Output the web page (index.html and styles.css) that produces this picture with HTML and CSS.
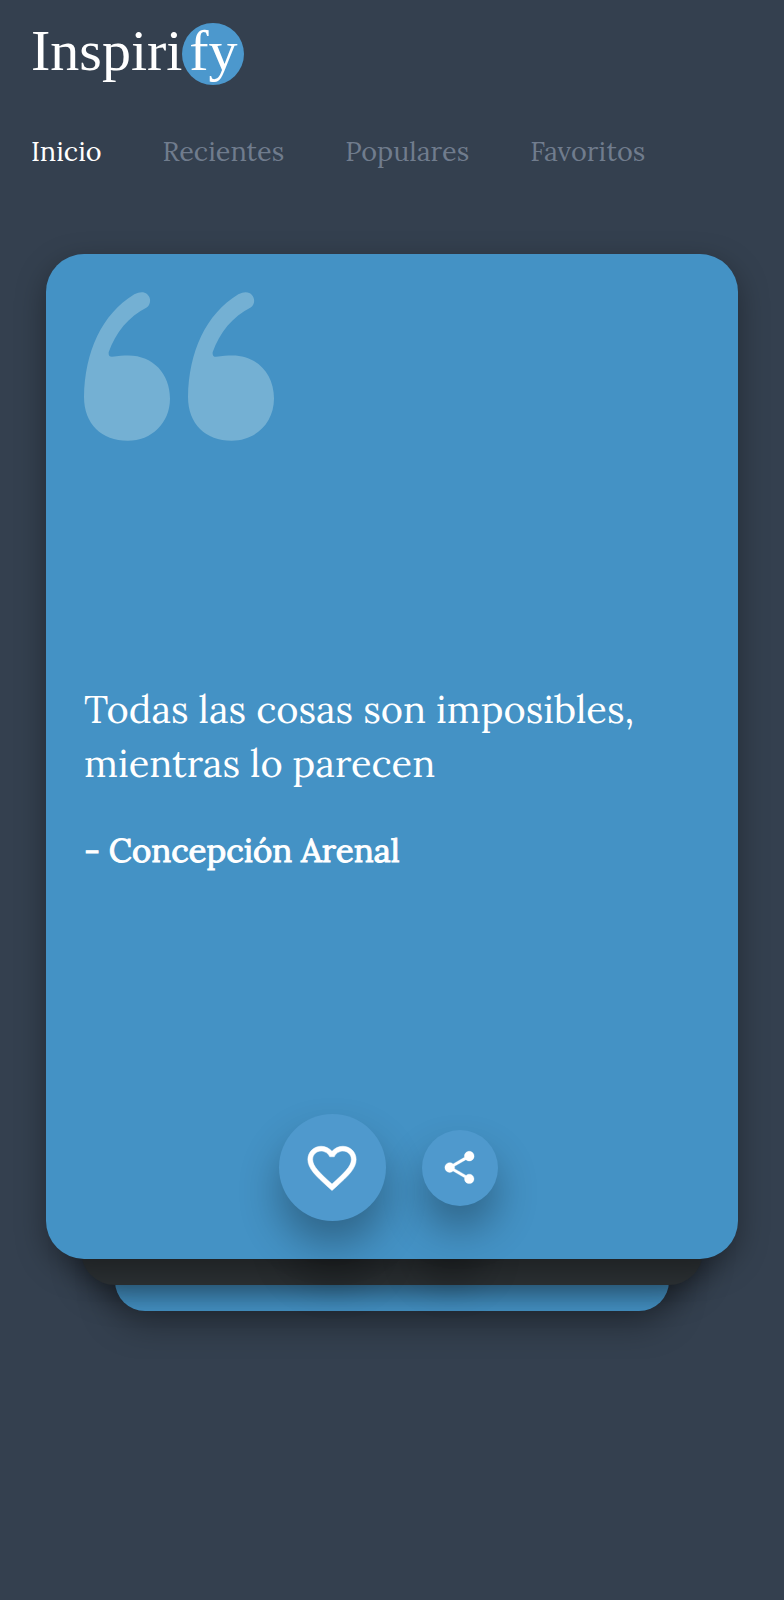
FILE: index.html
```html
<!DOCTYPE html>
<html lang="es">
<head>
    <meta charset="UTF-8">
    <meta name="viewport" content="width=device-width, initial-scale=1.0">
    <title>Inspirify</title>
    <link rel="stylesheet" href="styles.css">
</head>
<body>
    <header>
        <a href="#" class="logo">Inspiri<span class="logo-circle">fy</span></a>
        <nav>
            <a href="#" class="active">Inicio</a>
            <a href="#">Recientes</a>
            <a href="#">Populares</a>
            <a href="#">Favoritos</a>
        </nav>
    </header>

    <main class="stack">
        <div class="layer layer-back"></div>
        <div class="layer layer-middle"></div>
        <article class="card">
            <svg class="quote-icon" viewBox="132 141 570 446" aria-hidden="true">
                <path id="quote-mark" d="M305 141C331 141 339 174 320 187C266 214 227 262 206 321C205 330 208 335 216 335C235 332 250 331 265 331C340 331 390 387 390 460C390 533 335 587 263 587C185 587 132 537 132 455C134 320 185 207 283 147C291 143 298 141 305 141Z"/>
                <use href="#quote-mark" x="312"/>
            </svg>
            <div class="quote">
                <p class="quote-text">Todas las cosas son imposibles, mientras lo parecen</p>
                <p class="author">- Concepción Arenal</p>
            </div>
            <div class="actions">
                <button class="like" aria-label="Me gusta">
                    <svg viewBox="0 0 24 24"><path d="M16.5 3c-1.74 0-3.41.81-4.5 2.09C10.91 3.81 9.24 3 7.5 3 4.42 3 2 5.42 2 8.5c0 3.78 3.4 6.86 8.55 11.54L12 21.35l1.45-1.32C18.6 15.36 22 12.28 22 8.5 22 5.42 19.58 3 16.5 3zm-4.4 15.55l-.1.1-.1-.1C7.14 14.24 4 11.39 4 8.5 4 6.5 5.5 5 7.5 5c1.54 0 3.04.99 3.57 2.36h1.87C13.46 5.99 14.96 5 16.5 5c2 0 3.5 1.5 3.5 3.5 0 2.89-3.14 5.74-7.9 10.05z"/></svg>
                </button>
                <button class="share" aria-label="Compartir">
                    <svg viewBox="0 0 24 24"><path d="M18 16.08c-.76 0-1.44.3-1.96.77L8.91 12.7c.05-.23.09-.46.09-.7s-.04-.47-.09-.7l7.05-4.11c.54.5 1.25.81 2.04.81 1.66 0 3-1.34 3-3s-1.34-3-3-3-3 1.34-3 3c0 .24.04.47.09.7L8.04 9.81C7.5 9.31 6.79 9 6 9c-1.66 0-3 1.34-3 3s1.34 3 3 3c.79 0 1.5-.31 2.04-.81l7.12 4.16c-.05.21-.08.43-.08.65 0 1.61 1.31 2.92 2.92 2.92s2.92-1.31 2.92-2.92-1.31-2.92-2.92-2.92z"/></svg>
                </button>
            </div>
        </article>
    </main>
</body>
</html>
```

FILE: styles.css
```css
* {
    box-sizing: border-box;
}
body {
    margin: 0;
    background-color: #34404f;
    color: #fff;
    font-family: Lora, "Liberation Serif", serif;
}
a {
    color: inherit;
    text-decoration: none;
}
header {
    padding: 23px 31px 0;
}
.logo {
    display: flex;
    width: max-content;
    font-family: "Liberation Serif", serif;
    font-size: 58px;
    line-height: 56px;
}
.logo-circle {
    width: 62px;
    height: 62px;
    border-radius: 50%;
    background-color: #4c98cd;
    text-align: center;
}
nav {
    display: flex;
    flex-wrap: wrap;
    gap: 0 61px;
    margin-top: 48px;
    font-size: 27px;
    line-height: 36px;
}
nav a {
    color: #707c8d;
}
nav .active {
    color: #fff;
}

/* tarjetas apiladas */
.stack {
    position: relative;
    z-index: 0;
    margin: 85px 46px 100px;
}
.layer {
    position: absolute;
    height: 200px;
}
.layer-back {
    right: 10%;
    bottom: -52px;
    left: 10%;
    border-radius: 30px;
    background-color: #4492c5;
    box-shadow: 0 10px 36px rgba(0, 0, 0, 0.4);
}
.layer-middle {
    right: 5%;
    bottom: -26px;
    left: 5%;
    border-radius: 34px;
    background-color: #2b3033;
    box-shadow: 0 10px 30px rgba(0, 0, 0, 0.45);
}
/* sombra de los botones de la tarjeta de atrás */
.layer-middle::before,
.layer-middle::after {
    content: "";
    position: absolute;
    bottom: 26px;
    border-radius: 50%;
    box-shadow: 0 24px 36px rgba(0, 0, 0, 0.25);
}
.layer-middle::before {
    left: 33%;
    width: 96px;
    height: 96px;
}
.layer-middle::after {
    left: 54%;
    width: 68px;
    height: 68px;
}
.card {
    position: relative;
    display: flex;
    flex-direction: column;
    min-height: 1005px;
    padding: 38px;
    border-radius: 38px;
    background-color: #4492c5;
    box-shadow: 0 10px 30px rgba(0, 0, 0, 0.35);
}
.quote-icon {
    width: 190px;
    height: 149px;
    fill: #74b0d3;
}
.quote {
    margin: auto 0;
}
.quote-text {
    margin: 0 0 36px;
    font-size: 38px;
    line-height: 54px;
}
.author {
    margin: 0;
    font-size: 33px;
    line-height: 48px;
    -webkit-text-stroke: 1px #fff;
}
.actions {
    display: flex;
    justify-content: center;
    align-items: center;
    gap: 36px;
    padding-right: 8px;
}
button {
    display: flex;
    justify-content: center;
    align-items: center;
    padding: 0;
    border: none;
    border-radius: 50%;
    background-color: #4f99cd;
    box-shadow: 0 24px 40px rgba(0, 0, 0, 0.3);
    cursor: pointer;
}
button svg {
    fill: #fff;
    stroke: #fff;
    stroke-width: 0.2;
}
.like {
    width: 107px;
    height: 107px;
}
.like svg {
    width: 58px;
}
.share {
    width: 76px;
    height: 76px;
}
.share svg {
    width: 39px;
}
```
